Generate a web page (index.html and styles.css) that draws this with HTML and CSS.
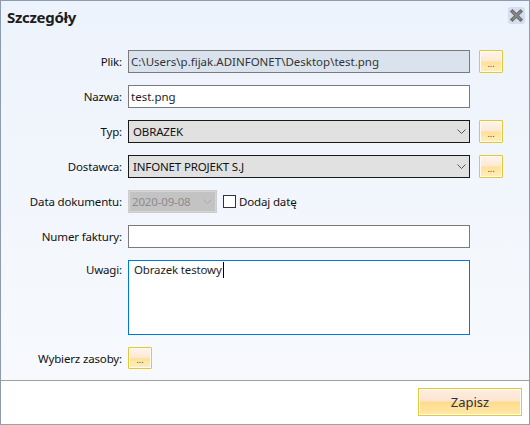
FILE: index.html
```html
<!DOCTYPE html>
<html lang="pl">
<head>
<meta charset="utf-8">
<title>Szczegóły</title>
<link rel="stylesheet" href="styles.css">
</head>
<body>
<div class="window">
  <div class="title-bar">
    <h1 class="title">Szczegóły</h1>
    <button class="close" title="Zamknij">
      <svg width="15" height="15" viewBox="0 0 15 15">
        <path d="M3.5 3.5 L11.5 11.5 M11.5 3.5 L3.5 11.5" stroke="#6c6c6c" stroke-width="3.6" stroke-linecap="square"/>
        <path d="M3.5 3.5 L11.5 11.5 M11.5 3.5 L3.5 11.5" stroke="#8e8e8e" stroke-width="1.2"/>
      </svg>
    </button>
  </div>

  <div class="form">
    <label class="label">Plik:</label>
    <input class="field readonly" type="text" value="C:\Users\p.fijak.ADINFONET\Desktop\test.png" readonly>
    <button class="more">...</button>

    <label class="label">Nazwa:</label>
    <input class="field" type="text" value="test.png">
    <span></span>

    <label class="label">Typ:</label>
    <div class="field select">
      <span>OBRAZEK</span>
      <svg class="chevron" width="9" height="5" viewBox="0 0 9 5"><path d="M0.5 0.5 L4.5 4.5 L8.5 0.5" fill="none" stroke="#555" stroke-width="1"/></svg>
    </div>
    <button class="more">...</button>

    <label class="label">Dostawca:</label>
    <div class="field select">
      <span>INFONET PROJEKT S.J</span>
      <svg class="chevron" width="9" height="5" viewBox="0 0 9 5"><path d="M0.5 0.5 L4.5 4.5 L8.5 0.5" fill="none" stroke="#555" stroke-width="1"/></svg>
    </div>
    <button class="more">...</button>

    <label class="label">Data dokumentu:</label>
    <div class="date-row">
      <div class="date">
        <span>2020-09-08</span>
        <svg class="chevron" width="9" height="5" viewBox="0 0 9 5"><path d="M0.5 0.5 L4.5 4.5 L8.5 0.5" fill="none" stroke="#a8a8a8" stroke-width="1"/></svg>
      </div>
      <label class="check"><span class="box"></span>Dodaj datę</label>
    </div>
    <span></span>

    <label class="label">Numer faktury:</label>
    <input class="field" type="text" value="">
    <span></span>

    <label class="label top">Uwagi:</label>
    <div class="field notes">Obrazek testowy<span class="caret"></span></div>
    <span></span>

    <label class="label">Wybierz zasoby:</label>
    <div><button class="more small">...</button></div>
    <span></span>
  </div>

  <div class="footer">
    <button class="save">Zapisz</button>
  </div>
</div>
</body>
</html>
```

FILE: styles.css
```css
* {
  box-sizing: border-box;
}
body {
  margin: 0;
  font-family: "Noto Sans", "Open Sans", sans-serif;
  font-size: 11.5px;
  letter-spacing: -0.15px;
  color: #111;
}
.window {
  width: 530px;
  height: 425px;
  border: 1px solid #8d9bb0;
  border-bottom-color: #a0a0a0;
  display: flex;
  flex-direction: column;
  background: linear-gradient(#edf3fc, #f8fafd);
}
.title-bar {
  height: 49px;
  display: flex;
  justify-content: space-between;
  align-items: flex-start;
  padding: 6px 4px 0 6px;
}
.title {
  margin: 0;
  font-size: 15px;
  font-weight: bold;
  color: #1c1c1c;
  letter-spacing: -0.3px;
}
.close {
  width: 17px;
  height: 17px;
  padding: 1px;
  border: 0;
  border-radius: 3px;
  background: #d3dff0;
}
.form {
  display: grid;
  grid-template-columns: 127px 342px 24px;
  column-gap: 0;
  row-gap: 12px;
  align-items: center;
}
.form > :nth-child(3n) {
  margin-left: 9px;
}
.label {
  text-align: right;
  padding-right: 6px;
  white-space: nowrap;
}
.label.top {
  align-self: start;
  padding-top: 2px;
}
.field {
  height: 23px;
  width: 342px;
  margin: 0;
  border: 1px solid #7a7a7a;
  background: #fff;
  font: inherit;
  color: #1e1e1e;
  padding: 0 2px;
  outline: none;
}
.field.readonly {
  background: #dae2ed;
  color: #333;
}
.select {
  display: flex;
  align-items: center;
  justify-content: space-between;
  background: #e1e1e1;
  border-color: #1a1a1a;
  padding: 0 3px 0 4px;
  color: #111;
}
.chevron {
  display: block;
}
.date-row {
  display: flex;
  align-items: center;
}
.date {
  width: 89px;
  height: 23px;
  border: 1px solid #cccccc;
  background: #c3c3c3;
  box-shadow: inset 0 0 0 1px #d5d5d5;
  color: #8c8c8c;
  display: flex;
  align-items: center;
  justify-content: space-between;
  padding: 0 4px 0 3px;
}
.check {
  display: flex;
  align-items: center;
  margin-left: 6px;
}
.box {
  width: 13px;
  height: 13px;
  border: 1px solid #333;
  background: #fff;
  margin-right: 3px;
}
.notes {
  height: 75px;
  border-color: #0078d7;
  padding: 1px 5px;
  display: flex;
  align-items: flex-start;
}
.caret {
  width: 1px;
  height: 16px;
  background: #000;
  margin-left: 1px;
}
.more {
  width: 24px;
  height: 23px;
  padding: 0 0 4px;
  border: 1px solid #e2c73c;
  border-radius: 1px;
  box-shadow: inset 0 0 0 1px #fffaf0;
  background: linear-gradient(#fff5ec, #fde8d4 48%, #ffe196 52%, #ffefbc);
  font: 9px "Noto Sans", sans-serif;
  color: #4a3a5a;
  line-height: 9px;
  display: flex;
  align-items: flex-end;
  justify-content: center;
}
.more.small {
  height: 22px;
  margin-left: 0;
}
.footer {
  margin-top: auto;
  height: 44px;
  border-top: 1px solid #a0a0a0;
  background: #fff;
  display: flex;
  justify-content: flex-end;
  align-items: flex-start;
  padding: 7px 7px 0 0;
}
.save {
  width: 104px;
  height: 28px;
  border: 1px solid #e2c93a;
  box-shadow: inset 0 0 0 1px #fffaf2;
  background: linear-gradient(#fdeee3, #fde4cf 45%, #ffdc89 52%, #ffe8ad);
  font: 13px "Noto Sans", sans-serif;
  color: #2b2f4c;
  padding: 0;
}
```
